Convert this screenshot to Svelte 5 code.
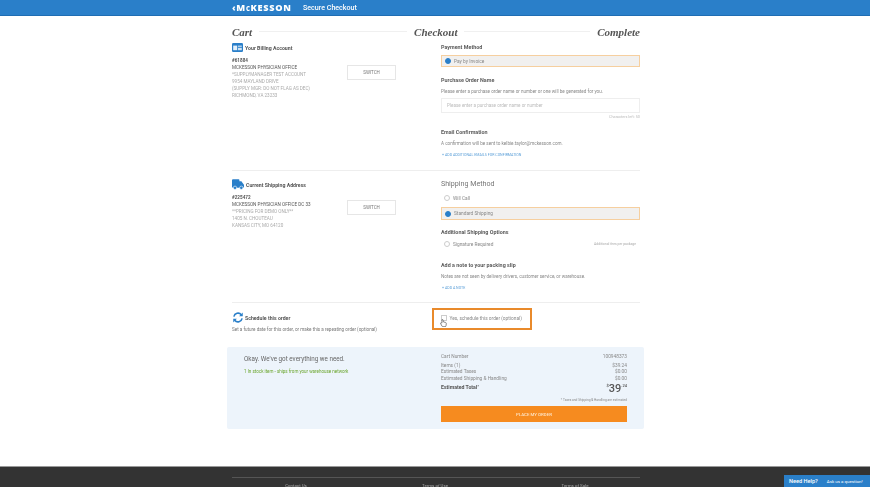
<script lang="ts">
	const billing = ['MCKESSON PHYSICIAN OFFICE', '*SUPPLYMANAGER TEST ACCOUNT', '9954 MAYLAND DRIVE', '(SUPPLY MGR: DO NOT FLAG AS DEC)', 'RICHMOND, VA 23233'];
	const shipping = ['MCKESSON PHYSICIAN OFFICE DC 33', '**PRICING FOR DEMO ONLY**', '1405 N. CHOUTEAU', 'KANSAS CITY, MO 64120'];
	const totals = [
		{ label: 'Items (1)', value: '$39.24' },
		{ label: 'Estimated Taxes', value: '$0.00' },
		{ label: 'Estimated Shipping & Handling', value: '$0.00' },
	];
</script>

<div class="page">
	<header class="topbar">
		<div class="topbar-inner">
			<span class="logo"><span class="chev">‹</span>M<span class="small-c">C</span>KESSON</span>
			<span class="secure">Secure Checkout</span>
		</div>
	</header>

	<main class="wrap">
		<div class="steps">
			<span>Cart</span>
			<i class="line-a"></i>
			<span>Checkout</span>
			<i class="line-b"></i>
			<span>Complete</span>
		</div>

		<section class="row billing">
			<div class="left">
				<div class="head">
					<svg width="11" height="9" viewBox="0 0 11 9"><rect width="11" height="9" rx="1.2" fill="#2a7fc9"/><rect x="1.2" y="2.6" width="4" height="4.6" fill="#e4f0fa"/><rect x="6" y="2.6" width="3.8" height="1.2" fill="#cfe3f4"/><rect x="6" y="4.8" width="3.8" height="2.4" fill="#cfe3f4"/></svg>
					<b>Your Billing Account</b>
				</div>
				<div class="addr-wrap">
					<div class="addr">
						<b>#61884</b>
						{#each billing as line, i}
							<div class:dark={i === 0}>{line}</div>
						{/each}
					</div>
					<button class="switch">SWITCH</button>
				</div>
			</div>
			<div class="right">
				<h4>Payment Method</h4>
				<div class="choice selected"><span class="radio on"></span>Pay by Invoice</div>
				<h4 class="gap-po">Purchase Order Name</h4>
				<p class="copy">Please enter a purchase order name or number or one will be generated for you.</p>
				<div class="input">Please enter a purchase order name or number</div>
				<div class="chars">Characters left: 50</div>
				<h4 class="gap-email">Email Confirmation</h4>
				<p class="copy">A confirmation will be sent to kelbie.taylor@mckesson.com.</p>
				<a class="link" href="#top">+ ADD ADDITIONAL EMAILS FOR CONFIRMATION</a>
			</div>
		</section>

		<section class="row shipping">
			<div class="left">
				<div class="head">
					<svg width="12" height="11" viewBox="0 0 12 11"><path d="M0 1.2Q0 .2 1 .2h5.6q.8 0 .8.8v1.3h2l1.8 2.4q.8.8.8 1.6v1.6q0 .8-.8.8H1q-1 0-1-1z" fill="#2a7fc9"/><circle cx="3" cy="8.8" r="1.7" fill="#2a7fc9" stroke="#fff" stroke-width=".6"/><circle cx="9.3" cy="8.8" r="1.7" fill="#2a7fc9" stroke="#fff" stroke-width=".6"/></svg>
					<b>Current Shipping Address</b>
				</div>
				<div class="addr-wrap">
					<div class="addr">
						<b>#225472</b>
						{#each shipping as line, i}
							<div class:dark={i === 0}>{line}</div>
						{/each}
					</div>
					<button class="switch">SWITCH</button>
				</div>
			</div>
			<div class="right">
				<h3>Shipping Method</h3>
				<div class="plain"><span class="radio"></span>Will Call</div>
				<div class="choice selected std"><span class="radio on"></span>Standard Shipping</div>
				<h4 class="gap-extra">Additional Shipping Options</h4>
				<div class="plain sig">
					<span class="radio"></span>Signature Required
					<small>Additional fees per package</small>
				</div>
				<h4 class="gap-note">Add a note to your packing slip</h4>
				<p class="copy">Notes are not seen by delivery drivers, customer service, or warehouse.</p>
				<a class="link" href="#top">+ ADD A NOTE</a>
			</div>
		</section>

		<section class="row schedule">
			<div class="left">
				<div class="head">
					<svg width="12" height="11" viewBox="0 0 12 12" fill="none"><path d="M1.5 5A4.6 4.6 0 0 1 9.6 3" stroke="#2a7fc9" stroke-width="1.7"/><path d="M11.2.6v4H7.2z" fill="#2a7fc9"/><path d="M10.5 7A4.6 4.6 0 0 1 2.4 9" stroke="#2a7fc9" stroke-width="1.7"/><path d="M.8 11.4v-4h4z" fill="#2a7fc9"/></svg>
					<b>Schedule this order</b>
				</div>
				<p class="copy sched-copy">Set a future date for this order, or make this a repeating order (optional)</p>
			</div>
			<div class="right">
				<div class="callout">
					<span class="check"></span>Yes, schedule this order (optional)
					<svg class="hand" width="7" height="8" viewBox="0 0 7 8"><path d="M2 .6q.7-.4 1 .3l.4 2 2 .5q1 .3.9 1.3l-.3 2q-.1 1-1 1H3q-.7 0-1-.6L.6 4.6q-.3-.6.3-.8.5-.2 1 .3z" fill="#fff" stroke="#555" stroke-width=".7"/></svg>
				</div>
			</div>
		</section>

		<section class="summary">
			<div class="okay">
				<h2>Okay. We've got everything we need.</h2>
				<p>1 In stock item - ships from your warehouse network</p>
			</div>
			<div class="totals">
				<div class="tline cart"><span>Cart Number</span><span>100948373</span></div>
				{#each totals as t}
					<div class="tline"><span>{t.label}</span><span>{t.value}</span></div>
				{/each}
				<div class="grand">
					<b>Estimated Total<sup>*</sup></b>
					<span class="price"><sup>$</sup>39<sup>.24</sup></span>
				</div>
				<div class="fine">* Taxes and Shipping &amp; Handling are estimated</div>
				<button class="place">PLACE MY ORDER</button>
			</div>
		</section>
	</main>

	<footer class="foot">
		<div class="foot-links">
			<span>Contact Us</span>
			<span>Terms of Use</span>
			<span>Terms of Sale</span>
		</div>
		<div class="help"><b>Need Help?</b><span>Ask us a question!</span></div>
	</footer>
</div>

<style>
	:global(body) {
		margin: 0;
		background: #fff;
	}

	.page {
		height: 487px;
		overflow: hidden;
		display: flex;
		flex-direction: column;
		font-family: Roboto, "Liberation Sans", sans-serif;
		color: #777;
		filter: blur(0.5px);
	}

	.topbar {
		height: 16px;
		background: #2a7fc9;
		border-bottom: 1px solid #1f6db3;
		box-sizing: border-box;
		flex: none;
	}

	.topbar-inner {
		width: 408px;
		margin-left: 232px;
		height: 15px;
		display: flex;
		align-items: center;
		color: #fff;
	}

	.logo {
		font-family: "Open Sans", sans-serif;
		font-weight: 800;
		font-size: 9.2px;
		width: 71px;
		letter-spacing: 0.7px;
	}

	.chev {
		font-size: 9px;
	}

	.small-c {
		font-size: 6px;
	}

	.secure {
		font-size: 7.1px;
		font-weight: 500;
	}

	.wrap {
		flex: 1;
		width: 408px;
		margin-left: 232px;
	}

	.steps {
		display: flex;
		align-items: center;
		gap: 7px;
		height: 25px;
		padding-top: 6px;
		box-sizing: border-box;
		font: italic 700 11px "Liberation Serif", serif;
		color: #555;
	}

	.steps i {
		height: 1px;
		background: #f0f0f0;
	}

	.line-a {
		flex: 147;
	}

	.line-b {
		flex: 125;
	}

	.row {
		display: grid;
		grid-template-columns: 209px 199px;
		border-bottom: 1px solid #eee;
		box-sizing: border-box;
	}

	.billing {
		height: 130px;
	}

	.shipping {
		height: 132px;
	}

	.schedule {
		height: 44px;
		border-bottom: 0;
	}

	.head {
		display: flex;
		align-items: center;
		gap: 2px;
		font-size: 5.2px;
		color: #555;
	}

	.billing .head {
		margin-top: 2px;
	}

	.shipping .head {
		margin-top: 8px;
	}

	.schedule .head {
		margin-top: 9px;
		gap: 1px;
	}

	.addr-wrap {
		display: grid;
		grid-template-columns: 115px 49px;
		align-items: start;
	}

	.addr {
		font-size: 4.6px;
		line-height: 7px;
		color: #aaa;
		white-space: nowrap;
	}

	.billing .addr {
		margin-top: 5px;
	}

	.shipping .addr {
		margin-top: 4px;
	}

	.addr b,
	.dark {
		color: #555;
	}

	.switch {
		height: 15px;
		padding: 0;
		border: 1px solid #e6e6e6;
		background: #fff;
		color: #777;
		font: 4.5px Roboto, sans-serif;
	}

	.billing .switch {
		margin-top: 13px;
	}

	.shipping .switch {
		margin-top: 10px;
	}

	.right {
		min-width: 0;
	}

	h4,
	h3,
	h2,
	p {
		margin: 0;
		font-weight: 400;
	}

	h4 {
		font-size: 5.4px;
		line-height: 7px;
		font-weight: 700;
		color: #5c5c5c;
	}

	.billing h4:first-child {
		margin-top: 3px;
	}

	h3 {
		font-size: 7.1px;
		line-height: 10px;
		margin-top: 8px;
		color: #777;
	}

	.copy {
		font-size: 4.6px;
		line-height: 7px;
		color: #888;
		white-space: nowrap;
	}

	.choice {
		display: flex;
		align-items: center;
		height: 12px;
		box-sizing: border-box;
		margin-top: 4px;
		padding-left: 3px;
		background: #f1f0ef;
		border: 1px solid #f6cf9f;
		font-size: 4.8px;
		color: #888;
	}

	.radio {
		width: 4px;
		height: 4px;
		margin-right: 3px;
		border: 0.6px solid #ccc;
		border-radius: 50%;
		background: #fff;
		box-sizing: content-box;
		flex: none;
	}

	.radio.on {
		background: #2a7fc9;
		border-color: #2a7fc9;
	}

	.gap-po {
		margin-top: 10px;
	}

	.billing .copy {
		margin-top: 4px;
	}

	.input {
		height: 15px;
		margin-top: 3px;
		padding-left: 5px;
		display: flex;
		align-items: center;
		border: 1px solid #eee;
		box-sizing: border-box;
		font-size: 4.6px;
		color: #bbb;
	}

	.chars {
		margin-top: 1px;
		text-align: right;
		font-size: 3.8px;
		line-height: 6px;
		color: #bbb;
	}

	.gap-email {
		margin-top: 9px;
	}

	.link {
		display: block;
		margin-top: 5px;
		font-size: 3.6px;
		line-height: 7px;
		color: #5b9fd8;
		text-decoration: none;
		padding-left: 1px;
	}

	.plain {
		display: flex;
		align-items: center;
		height: 8px;
		padding-left: 3px;
		font-size: 4.8px;
		color: #888;
	}

	.shipping h3 + .plain {
		margin-top: 5px;
	}

	.std {
		height: 13px;
		margin-top: 5px;
	}

	.gap-extra {
		margin-top: 9px;
	}

	.sig {
		margin-top: 4px;
	}

	.sig small {
		margin-left: auto;
		margin-right: 4px;
		font-size: 3.4px;
		color: #aaa;
	}

	.gap-note {
		margin-top: 14px;
	}

	.shipping .copy {
		margin-top: 4px;
	}

	.sched-copy {
		margin-top: 3px;
		color: #777;
	}

	.callout {
		position: relative;
		display: flex;
		align-items: center;
		width: 100px;
		height: 22px;
		margin: 5px 0 0 -9px;
		padding: 0 0 2px 7px;
		border: 2px solid #e98a2b;
		box-sizing: border-box;
		font-size: 4.8px;
		color: #888;
	}

	.check {
		width: 3.5px;
		height: 3.5px;
		margin-right: 3px;
		border: 0.6px solid #ccc;
		flex: none;
	}

	.hand {
		position: absolute;
		left: 6px;
		top: 9px;
	}

	.summary {
		display: grid;
		grid-template-columns: 214px 186px;
		width: 417px;
		height: 82px;
		margin-left: -5px;
		background: #edf4fb;
		border-radius: 2px;
		box-sizing: border-box;
	}

	.okay {
		padding: 8px 0 0 17px;
	}

	.okay h2 {
		font-size: 6.3px;
		line-height: 8px;
		font-weight: 400;
		color: #666;
	}

	.okay p {
		margin-top: 5px;
		font-size: 4.5px;
		line-height: 7px;
		color: #6aa52c;
	}

	.totals {
		padding-top: 7px;
		font-size: 4.8px;
		color: #888;
	}

	.tline {
		display: flex;
		justify-content: space-between;
		line-height: 6.6px;
	}

	.cart {
		margin-bottom: 2px;
	}

	.grand {
		display: flex;
		justify-content: space-between;
		align-items: flex-start;
		height: 11px;
		margin-top: 1px;
	}

	.grand b {
		font-size: 5.2px;
		line-height: 8px;
		color: #555;
	}

	.grand sup,
	.price sup {
		font-size: 4px;
		vertical-align: top;
		line-height: 6px;
		position: relative;
		top: 1px;
	}

	.price {
		font-size: 11px;
		line-height: 13px;
		font-weight: 500;
		color: #555;
		margin-top: -1px;
	}

	.fine {
		margin-top: 3px;
		text-align: right;
		font-size: 3.2px;
		line-height: 6px;
		color: #888;
	}

	.place {
		display: block;
		width: 100%;
		height: 16px;
		margin-top: 3px;
		padding: 0;
		border: 0;
		background: #f68b1f;
		color: #fde3c4;
		font: 500 4.4px Roboto, sans-serif;
	}

	.foot {
		position: relative;
		flex: none;
		height: 21px;
		background: #333;
		border-top: 1px solid #999;
		box-sizing: border-box;
	}

	.foot-links {
		display: grid;
		grid-template-columns: 128px 150px 130px;
		width: 408px;
		margin: 10px 0 0 232px;
		border-top: 1px solid #555;
		padding-top: 5px;
		font-size: 4.4px;
		line-height: 6px;
		color: #aaa;
		text-align: center;
	}

	.help {
		position: absolute;
		right: 0;
		bottom: 0;
		width: 86px;
		height: 12px;
		display: flex;
		align-items: center;
		gap: 9px;
		padding-left: 5px;
		box-sizing: border-box;
		background: #2a7fc9;
		color: #fff;
		font-size: 4.4px;
		white-space: nowrap;
	}

	.help b {
		font-size: 5.6px;
		font-weight: 500;
	}
</style>
